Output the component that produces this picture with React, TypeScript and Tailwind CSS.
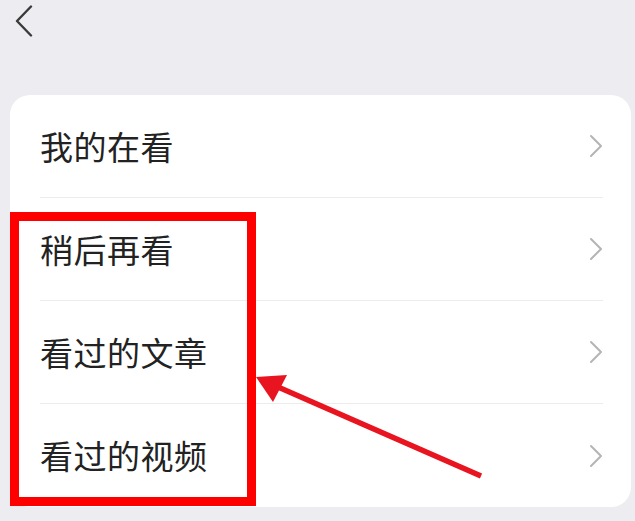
import React from "react";

const items = ["我的在看", "稍后再看", "看过的文章", "看过的视频"];

function Chevron() {
  return (
    <svg width="14" height="24" viewBox="0 0 14 24" fill="none">
      <polyline points="2,2 12,12 2,22" stroke="#b4b4b4" strokeWidth="2" strokeLinecap="round" strokeLinejoin="round" />
    </svg>
  );
}

export default function App() {
  return (
    <div
      className="relative w-[635px] h-[521px] overflow-hidden bg-[#edecf1]"
      style={{ fontFamily: '"Noto Sans CJK SC", "Noto Sans", sans-serif' }}
    >
      <div className="h-[95px] pl-[14px] pt-[5px]">
        <svg width="20" height="32" viewBox="0 0 20 32" fill="none">
          <polyline points="17,1.5 3,16 17,30.5" stroke="#3a3a3a" strokeWidth="2.4" strokeLinecap="round" strokeLinejoin="round" />
        </svg>
      </div>
      <div className="ml-[10px] mr-[4px] bg-white rounded-[20px] flex flex-col">
        {items.map((t, i) => (
          <div key={t} className="pl-[30px] pr-[28px]">
            <div
              className={
                "h-[103px] flex items-center justify-between " +
                (i < items.length - 1 ? "border-b-[1.5px] border-[#ececee]" : "")
              }
            >
              <span className="text-[33px] leading-none text-[#222222] tracking-[0.5px]">{t}</span>
              <Chevron />
            </div>
          </div>
        ))}
      </div>
      <div className="absolute left-[10px] top-[212px] w-[246px] h-[294px] border-[9px] border-[#ff0000]" />
      <svg className="absolute left-0 top-0" width="635" height="521" viewBox="0 0 635 521">
        <line x1="481" y1="476" x2="278" y2="387" stroke="#e8141f" strokeWidth="5.5" />
        <polygon points="256,377 287,375 273,402" fill="#e8141f" />
      </svg>
    </div>
  );
}
